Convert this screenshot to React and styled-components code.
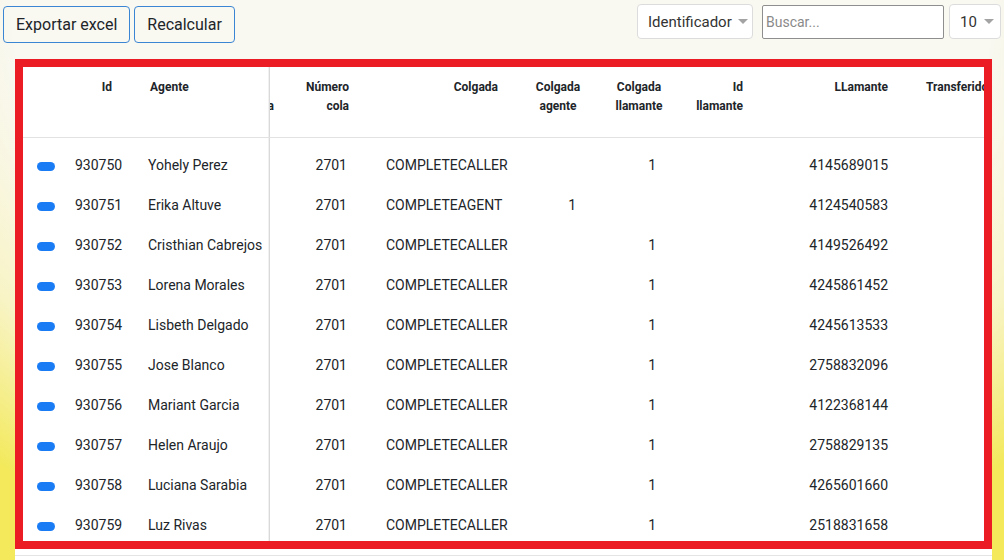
import React, { useLayoutEffect, useRef } from "react";
import styled, { createGlobalStyle } from "styled-components";

const GlobalStyle = createGlobalStyle`
  html, body {
    margin: 0;
    height: 560px;
    overflow: hidden;
  }
  body {
    font-family: Roboto, "Liberation Sans", Arial, sans-serif;
    color: #212529;
    background: radial-gradient(ellipse 74% 105% at 50% 0%, #f9f8f1 66%, #f8f4c6 84%, #f3e95b 104%);
  }
`;

// hPad / bPad are the left and right paddings of the header and body cells
const columns = [
  { key: "toggle", w: 46, head: [], sticky: 0 },
  { key: "id", w: 71, head: ["Id"], hAlign: "right", hPad: [0, 28], bAlign: "left", bPad: [6, 0], sticky: 46 },
  { key: "agente", w: 130, head: ["Agente"], hAlign: "left", hPad: [10, 0], bAlign: "left", bPad: [8, 0], sticky: 117, edge: true },
  { key: "fecha", w: 150, head: ["Fecha"], hAlign: "left", hPad: [10, 10], bAlign: "left", bPad: [10, 10] },
  { key: "hora", w: 65, head: ["Hora", "entrada"], hAlign: "center", hPad: [10, 10], bAlign: "center", bPad: [10, 10] },
  { key: "cola", w: 71, head: ["Número", "cola"], hAlign: "right", hPad: [0, 8], bAlign: "right", bPad: [0, 10] },
  { key: "colgada", w: 161, head: ["Colgada"], hAlign: "right", hPad: [0, 20], bAlign: "left", bPad: [29, 0] },
  { key: "cAgente", w: 80, head: ["Colgada", "agente"], hAlign: "center", hPad: [0, 0], bAlign: "right", bPad: [0, 22] },
  { key: "cLlamante", w: 82, head: ["Colgada", "llamante"], hAlign: "center", hPad: [0, 0], bAlign: "right", bPad: [0, 24] },
  { key: "idLlamante", w: 73, head: ["Id", "llamante"], hAlign: "right", hPad: [0, 10], bAlign: "right", bPad: [0, 10] },
  { key: "llamante", w: 145, head: ["LLamante"], hAlign: "right", hPad: [0, 10], bAlign: "right", bPad: [0, 10] },
  { key: "transferido", w: 110, head: ["Transferido"], hAlign: "left", hPad: [28, 0], bAlign: "left", bPad: [28, 0] },
  { key: "duracion", w: 110, head: ["Duración"], hAlign: "left", hPad: [10, 10], bAlign: "left", bPad: [10, 10] },
];

const rows = [
  ["930750", "Yohely Perez", "COMPLETECALLER", "", "1", "4145689015"],
  ["930751", "Erika Altuve", "COMPLETEAGENT", "1", "", "4124540583"],
  ["930752", "Cristhian Cabrejos", "COMPLETECALLER", "", "1", "4149526492"],
  ["930753", "Lorena Morales", "COMPLETECALLER", "", "1", "4245861452"],
  ["930754", "Lisbeth Delgado", "COMPLETECALLER", "", "1", "4245613533"],
  ["930755", "Jose Blanco", "COMPLETECALLER", "", "1", "2758832096"],
  ["930756", "Mariant Garcia", "COMPLETECALLER", "", "1", "4122368144"],
  ["930757", "Helen Araujo", "COMPLETECALLER", "", "1", "2758829135"],
  ["930758", "Luciana Sarabia", "COMPLETECALLER", "", "1", "4265601660"],
  ["930759", "Luz Rivas", "COMPLETECALLER", "", "1", "2518831658"],
].map(([id, agente, colgada, cAgente, cLlamante, llamante]) => ({
  id,
  agente,
  fecha: "2023-05-10",
  hora: "",
  cola: "2701",
  colgada,
  cAgente,
  cLlamante,
  idLlamante: "",
  llamante,
  transferido: "",
  duracion: "",
}));

// scroll offset of the table, it is shown moved past the first hidden columns
const SCROLL_LEFT = 199;

export default function App() {
  const scrollRef = useRef(null);

  useLayoutEffect(() => {
    if (scrollRef.current) scrollRef.current.scrollLeft = SCROLL_LEFT;
  }, []);

  return (
    <>
      <GlobalStyle />
      <Toolbar>
        <ButtonGroup>
          <OutlineButton>Exportar excel</OutlineButton>
          <OutlineButton>Recalcular</OutlineButton>
        </ButtonGroup>
        <Filters>
          <Select width={116}>
            Identificador <Caret />
          </Select>
          <SearchInput placeholder="Buscar..." />
          <Select width={52}>
            10 <Caret />
          </Select>
        </Filters>
      </Toolbar>

      <Card>
        <Frame>
          <Viewport ref={scrollRef}>
            <Table>
              <colgroup>
                {columns.map((c) => (
                  <col key={c.key} style={{ width: c.w }} />
                ))}
              </colgroup>
              <thead>
                <tr>
                  {columns.map((c) => (
                    <HeadCell
                      key={c.key}
                      align={c.hAlign}
                      pad={c.hPad}
                      sticky={c.sticky}
                      edge={c.edge}
                    >
                      {c.head.map((line, i) => (
                        <HeadLine key={i}>{line}</HeadLine>
                      ))}
                    </HeadCell>
                  ))}
                </tr>
              </thead>
              <tbody>
                {rows.map((r) => (
                  <Row key={r.id}>
                    {columns.map((c) => (
                      <Cell
                        key={c.key}
                        align={c.bAlign}
                        pad={c.bPad}
                        sticky={c.sticky}
                        edge={c.edge}
                      >
                        {c.key === "toggle" ? <Toggle /> : r[c.key]}
                      </Cell>
                    ))}
                  </Row>
                ))}
              </tbody>
            </Table>
          </Viewport>
        </Frame>
        <Footer />
      </Card>
    </>
  );
}

const Toolbar = styled.div`
  display: flex;
  justify-content: space-between;
  align-items: flex-start;
  height: 55px;
  padding: 4px 3px 0 3px;
  box-sizing: border-box;
`;

const ButtonGroup = styled.div`
  display: flex;
  gap: 4px;
  padding-top: 2px;
`;

const OutlineButton = styled.button`
  height: 37px;
  padding: 0 12px;
  border: 1px solid #3b86d4;
  border-radius: 4px;
  background: transparent;
  font-family: Roboto, "Liberation Sans", sans-serif;
  font-size: 16px;
  color: #212529;
  cursor: pointer;
`;

const Filters = styled.div`
  display: flex;
  align-items: flex-start;
`;

const Select = styled.div`
  width: ${(p) => p.width}px;
  height: 35px;
  box-sizing: border-box;
  display: flex;
  align-items: center;
  padding: 0 10px;
  background: #fff;
  border: 1px solid #dcdcdc;
  border-radius: 4px;
  font-size: 15px;
  color: #333;
  white-space: pre;
`;

const Caret = styled.span`
  margin-left: 3px;
  width: 0;
  height: 0;
  border-left: 5px solid transparent;
  border-right: 5px solid transparent;
  border-top: 5px solid #a3a3a3;
`;

const SearchInput = styled.input`
  width: 182px;
  height: 34px;
  box-sizing: border-box;
  margin: 1px 5px 0 9px;
  padding: 0 3px;
  border: 1px solid #8e8e8e;
  border-radius: 2px;
  font-family: Roboto, "Liberation Sans", sans-serif;
  font-size: 14px;
  color: #333;
  outline: none;
  &::placeholder {
    color: #8a8a8a;
  }
`;

const Card = styled.div`
  margin: 4px 12px 0 15px;
  background: #fff;
`;

const Frame = styled.div`
  border: 8px solid #ec1c24;
`;

const Viewport = styled.div`
  height: 474px;
  overflow-x: auto;
  overflow-y: hidden;
  scrollbar-width: none;
  &::-webkit-scrollbar {
    display: none;
  }
`;

const Table = styled.table`
  table-layout: fixed;
  border-collapse: separate;
  border-spacing: 0;
  width: 1294px;
`;

const stickyRules = (p) =>
  p.sticky !== undefined
    ? `
    position: sticky;
    left: ${p.sticky}px;
    z-index: 2;
    background: #fff;
  `
    : "";

const edgeRule = (p) =>
  p.edge ? "box-shadow: inset -1px 0 0 #d9d9d9, inset -2px 0 0 #f1f1f1;" : "";

const sidePad = (p) => {
  const [l, r] = p.pad || [0, 0];
  return `padding-left: ${l}px; padding-right: ${r}px;`;
};

const HeadCell = styled.th`
  height: 71px;
  box-sizing: border-box;
  vertical-align: top;
  padding-top: 11px;
  padding-bottom: 0;
  ${sidePad}
  text-align: ${(p) => p.align || "left"};
  font-size: 12px;
  font-weight: 700;
  line-height: 19px;
  color: #212529;
  border-bottom: 1px solid #e2e2e2;
  white-space: nowrap;
  overflow: hidden;
  ${stickyRules}
  ${edgeRule}
`;

const HeadLine = styled.div`
  line-height: 19px;
`;

const Row = styled.tr`
  &:first-child > td {
    padding-top: 7px;
  }
`;

const Cell = styled.td`
  height: 40px;
  padding-top: 0;
  padding-bottom: 0;
  ${sidePad}
  text-align: ${(p) => p.align || "left"};
  font-size: 14px;
  color: #212529;
  white-space: nowrap;
  overflow: hidden;
  ${stickyRules}
  ${edgeRule}
`;

const Toggle = styled.span`
  display: inline-block;
  vertical-align: middle;
  margin-left: 14px;
  width: 18px;
  height: 9px;
  border-radius: 5px;
  background: #1a7cf5;
`;

const Footer = styled.div`
  height: 20px;
  margin-top: 6px;
  border-top: 1px solid #e4e4e4;
`;
